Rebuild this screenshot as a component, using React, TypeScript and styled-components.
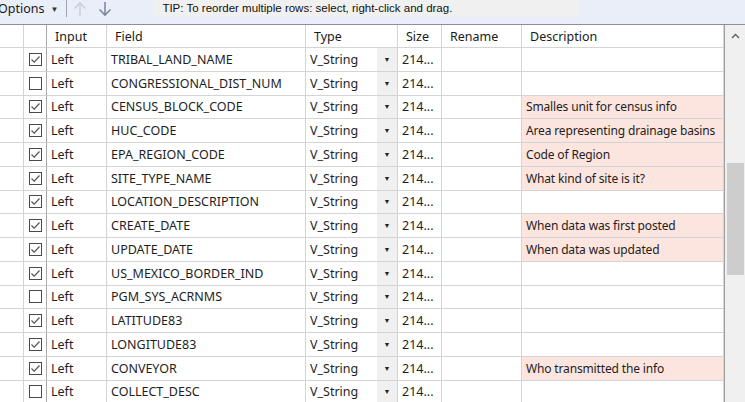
import styled, { createGlobalStyle } from "styled-components";

const GlobalStyle = createGlobalStyle`
  html, body {
    margin: 0;
    padding: 0;
    background: #ffffff;
    overflow: hidden;
  }
  body {
    font-family: "Noto Sans", "Open Sans", sans-serif;
  }
`;

const COLS = "24px 23px 60px 199px 92px 44px 80px 202px";

type Row = {
  on: boolean;
  field: string;
  desc?: string;
};

const rows: Row[] = [
  { on: true, field: "TRIBAL_LAND_NAME" },
  { on: false, field: "CONGRESSIONAL_DIST_NUM" },
  { on: true, field: "CENSUS_BLOCK_CODE", desc: "Smalles unit for census info" },
  { on: true, field: "HUC_CODE", desc: "Area representing drainage basins" },
  { on: true, field: "EPA_REGION_CODE", desc: "Code of Region" },
  { on: true, field: "SITE_TYPE_NAME", desc: "What kind of site is it?" },
  { on: true, field: "LOCATION_DESCRIPTION" },
  { on: true, field: "CREATE_DATE", desc: "When data was first posted" },
  { on: true, field: "UPDATE_DATE", desc: "When data was updated" },
  { on: true, field: "US_MEXICO_BORDER_IND" },
  { on: false, field: "PGM_SYS_ACRNMS" },
  { on: true, field: "LATITUDE83" },
  { on: true, field: "LONGITUDE83" },
  { on: true, field: "CONVEYOR", desc: "Who transmitted the info" },
  { on: false, field: "COLLECT_DESC" },
];

const Page = styled.div`
  width: 745px;
  height: 402px;
  display: flex;
  flex-direction: column;
  background: #ffffff;
  overflow: hidden;
`;

const Toolbar = styled.div`
  flex: none;
  display: flex;
  align-items: flex-start;
  background: #e9eef8;
  border-bottom: 1px solid #8a8f98;
  box-sizing: border-box;
  height: 25px;
`;

const OptionsBtn = styled.div`
  height: 17px;
  display: flex;
  align-items: center;
  gap: 6px;
  padding: 0 8px 0 0;
  margin-left: -2px;
  font-size: 12.5px;
  color: #1b1b1b;
  border-right: 1px solid #9aa3b0;
`;

const Caret = styled.span`
  font-size: 8px;
  color: #333;
`;

const ArrowBtn = styled.div<{ $dim?: boolean }>`
  width: 25px;
  height: 17px;
  display: flex;
  align-items: center;
  justify-content: center;
  color: ${(p) => (p.$dim ? "#c9d0db" : "#7d8ba0")};
`;

const Tip = styled.div`
  margin-left: 36px;
  width: 426px;
  height: 17px;
  box-sizing: border-box;
  padding-left: 9px;
  background: #f0f0f0;
  font-family: "Liberation Sans", Arial, sans-serif;
  font-size: 11.5px;
  line-height: 17px;
  color: #111;
`;

const Body = styled.div`
  flex: 1;
  display: flex;
  min-height: 0;
`;

const Grid = styled.div`
  flex: 1;
  display: grid;
  grid-template-columns: ${COLS};
  grid-auto-rows: 23.75px;
  grid-template-rows: 23px;
  align-content: start;
  overflow: hidden;
`;

const Cell = styled.div<{ $pink?: boolean; $dark?: boolean }>`
  box-sizing: border-box;
  border-right: 1px solid ${(p) => (p.$dark ? "#a8a8a8" : "#d4d4d4")};
  border-bottom: 1px solid #d4d4d4;
  display: flex;
  align-items: center;
  padding: 0 4px;
  font-size: 12.5px;
  color: #1e1e1e;
  white-space: nowrap;
  overflow: hidden;
  background: ${(p) => (p.$pink ? "#fce4df" : "#ffffff")};
`;

const DescCell = styled(Cell)`
  font-size: 12px;
  letter-spacing: -0.15px;
`;

const HeadCell = styled(Cell)`
  padding: 0 8px;
  color: #1a1a1a;
`;

const Box = styled.div`
  width: 13px;
  height: 13px;
  box-sizing: border-box;
  border: 1px solid #4a4a4a;
  display: flex;
  align-items: center;
  justify-content: center;
  margin-left: 1px;
`;

const TypeCell = styled(Cell)`
  padding: 0 0 0 4px;
  justify-content: space-between;
`;

const DropBtn = styled.div`
  width: 20px;
  height: 100%;
  background: #f0f0f0;
  display: flex;
  align-items: center;
  justify-content: center;
  font-size: 7px;
  color: #222;
`;

const Scroll = styled.div`
  width: 21px;
  flex: none;
  background: #f0f0f0;
  border-left: 1px solid #a0a0a0;
  box-sizing: border-box;
  display: flex;
  flex-direction: column;
  align-items: center;
`;

const ScrollArrow = styled.div`
  height: 22px;
  display: flex;
  align-items: center;
  justify-content: center;
  color: #606060;
`;

const Thumb = styled.div`
  margin-top: 116px;
  width: 17px;
  height: 112px;
  background: #cdcdcd;
`;

const Check = () => (
  <svg width="11" height="11" viewBox="0 0 11 11">
    <path d="M1.5 5.5 L4.2 8.2 L9.5 2.5" fill="none" stroke="#555" strokeWidth="1.2" />
  </svg>
);

export default function App() {
  return (
    <Page>
      <GlobalStyle />
      <Toolbar>
        <OptionsBtn>
          Options <Caret>▼</Caret>
        </OptionsBtn>
        <ArrowBtn $dim>
          <svg width="14" height="16" viewBox="0 0 14 16">
            <path d="M7 15 V2 M1.5 7.5 L7 2 L12.5 7.5" fill="none" stroke="currentColor" strokeWidth="1.6" />
          </svg>
        </ArrowBtn>
        <ArrowBtn>
          <svg width="14" height="16" viewBox="0 0 14 16">
            <path d="M7 1 V14 M1.5 8.5 L7 14 L12.5 8.5" fill="none" stroke="currentColor" strokeWidth="1.6" />
          </svg>
        </ArrowBtn>
        <Tip>TIP: To reorder multiple rows: select, right-click and drag.</Tip>
      </Toolbar>
      <Body>
        <Grid>
          <HeadCell />
          <HeadCell $dark />
          <HeadCell>Input</HeadCell>
          <HeadCell>Field</HeadCell>
          <HeadCell>Type</HeadCell>
          <HeadCell>Size</HeadCell>
          <HeadCell>Rename</HeadCell>
          <HeadCell>Description</HeadCell>
          {rows.map((r) => (
            <>
              <Cell key={r.field + "h"} />
              <Cell $dark>
                <Box>{r.on && <Check />}</Box>
              </Cell>
              <Cell>Left</Cell>
              <Cell>{r.field}</Cell>
              <TypeCell>
                V_String
                <DropBtn>▼</DropBtn>
              </TypeCell>
              <Cell>214...</Cell>
              <Cell />
              <DescCell $pink={!!r.desc}>{r.desc}</DescCell>
            </>
          ))}
        </Grid>
        <Scroll>
          <ScrollArrow>
            <svg width="9" height="6" viewBox="0 0 9 6">
              <path d="M1 5 L4.5 1.5 L8 5" fill="none" stroke="currentColor" strokeWidth="1.4" />
            </svg>
          </ScrollArrow>
          <Thumb />
        </Scroll>
      </Body>
    </Page>
  );
}
